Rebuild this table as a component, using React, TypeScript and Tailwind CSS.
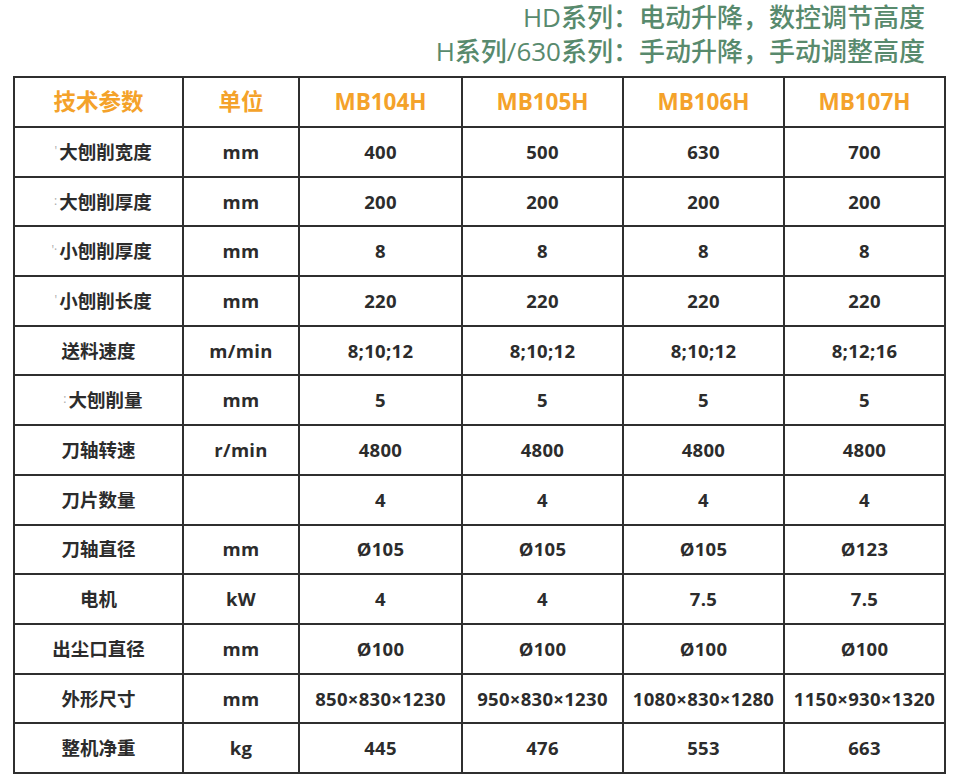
const models = ["MB104H", "MB105H", "MB106H", "MB107H"];

type Row = { label: string; mark?: string; unit: string; values: string[] };

// rows with a `mark` had their leading "最" erased in the source picture, only a speck is left
const rows: Row[] = [
  { label: "大刨削宽度", mark: "'", unit: "mm", values: ["400", "500", "630", "700"] },
  { label: "大刨削厚度", mark: ":", unit: "mm", values: ["200", "200", "200", "200"] },
  { label: "小刨削厚度", mark: "'·", unit: "mm", values: ["8", "8", "8", "8"] },
  { label: "小刨削长度", mark: "'", unit: "mm", values: ["220", "220", "220", "220"] },
  { label: "送料速度", unit: "m/min", values: ["8;10;12", "8;10;12", "8;10;12", "8;12;16"] },
  { label: "大刨削量", mark: ":", unit: "mm", values: ["5", "5", "5", "5"] },
  { label: "刀轴转速", unit: "r/min", values: ["4800", "4800", "4800", "4800"] },
  { label: "刀片数量", unit: "", values: ["4", "4", "4", "4"] },
  { label: "刀轴直径", unit: "mm", values: ["Ø105", "Ø105", "Ø105", "Ø123"] },
  { label: "电机", unit: "kW", values: ["4", "4", "7.5", "7.5"] },
  { label: "出尘口直径", unit: "mm", values: ["Ø100", "Ø100", "Ø100", "Ø100"] },
  { label: "外形尺寸", unit: "mm", values: ["850×830×1230", "950×830×1230", "1080×830×1280", "1150×930×1320"] },
  { label: "整机净重", unit: "kg", values: ["445", "476", "553", "663"] },
];

const font = "font-['Open_Sans','Noto_Sans_CJK_SC',sans-serif]";
const cell = "border-2 border-[#2f2f2f] text-center align-middle p-0";

export default function App() {
  return (
    <div className={`w-[957px] h-[784px] bg-white ${font} overflow-hidden`}>
      {/* series notes */}
      <div className="flex flex-col items-end pr-[32px] text-[26px] leading-[34px] font-medium text-[#588a6d]">
        <p>HD系列：电动升降，数控调节高度</p>
        <p>H系列/630系列：手动升降，手动调整高度</p>
      </div>

      <table className="ml-[13px] mt-[8px] border-collapse table-fixed w-[931px]">
        <colgroup>
          <col className="w-[169px]" />
          <col className="w-[116px]" />
          <col className="w-[163px]" />
          <col className="w-[161px]" />
          <col className="w-[161px]" />
          <col className="w-[161px]" />
        </colgroup>
        <thead>
          <tr className="h-[50px] text-[22.5px] font-bold text-[#f4a22a]">
            <th className={cell}>技术参数</th>
            <th className={cell}>单位</th>
            {models.map((m) => (
              <th key={m} className={cell}>
                {m}
              </th>
            ))}
          </tr>
        </thead>
        <tbody>
          {rows.map((r) => (
            <tr key={r.label} className="h-[49.7px] text-[18.5px] font-bold text-[#2c2c2c] tracking-[0.3px]">
              <td className={`${cell} tracking-normal`}>
                {r.mark && (
                  <span className="inline-block w-[1em] pr-[2px] text-right text-[12px] leading-none align-[4px] text-[#aaa] font-normal box-content">
                    {r.mark}
                  </span>
                )}
                {r.label}
              </td>
              <td className={cell}>{r.unit}</td>
              {r.values.map((v, i) => (
                <td key={i} className={cell}>
                  {v}
                </td>
              ))}
            </tr>
          ))}
        </tbody>
      </table>
    </div>
  );
}
